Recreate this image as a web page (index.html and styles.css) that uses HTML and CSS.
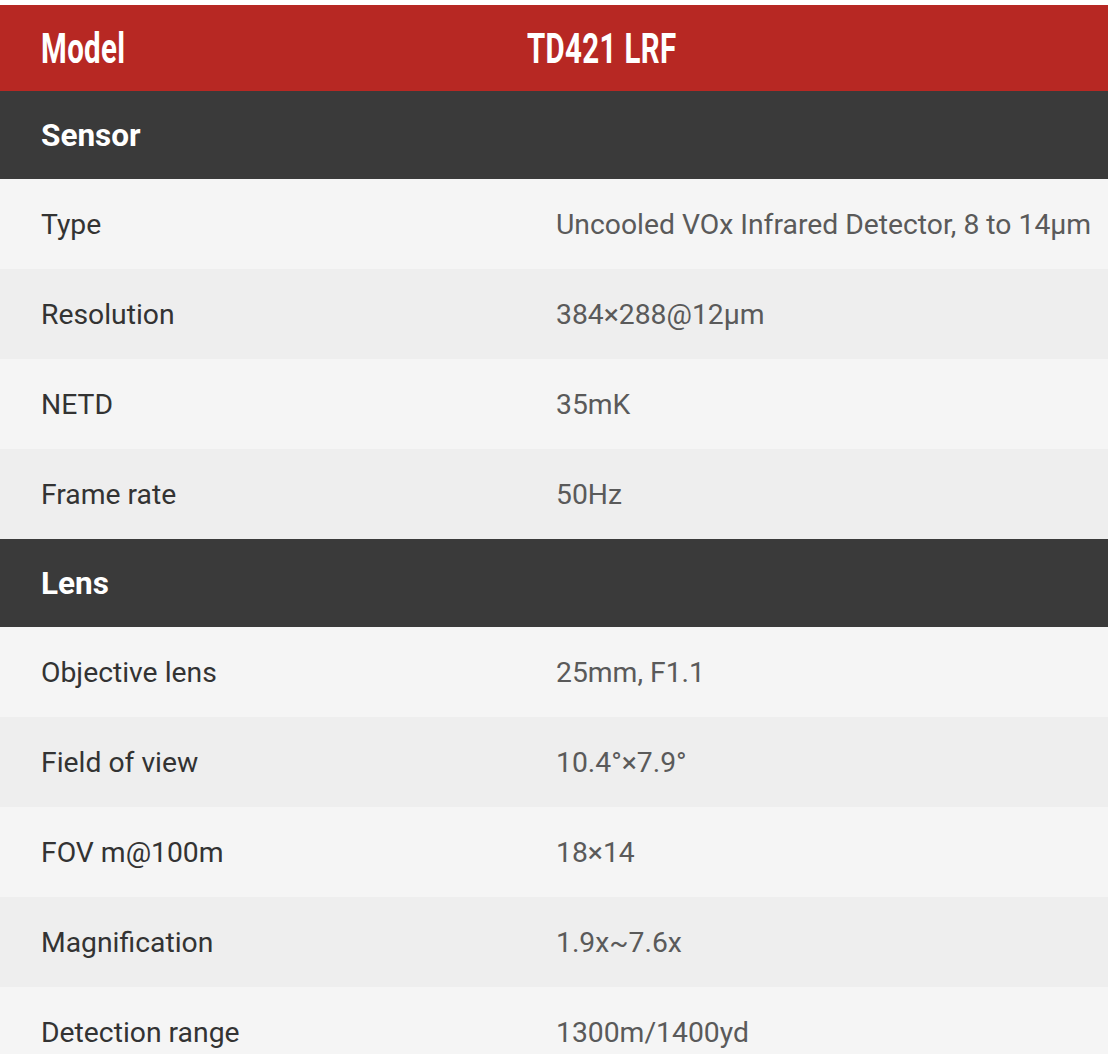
FILE: index.html
```html
<!DOCTYPE html>
<html>
<head>
<meta charset="utf-8">
<link rel="stylesheet" href="styles.css">
</head>
<body>
<div class="spec">
  <div class="head">
    <div class="head-label"><span class="cond">Model</span></div>
    <div class="head-value"><span class="cond">TD421 LRF</span></div>
  </div>
  <div class="section">Sensor</div>
  <div class="row odd"><div class="label">Type</div><div class="value">Uncooled VOx Infrared Detector, 8 to 14μm</div></div>
  <div class="row even"><div class="label">Resolution</div><div class="value">384×288@12μm</div></div>
  <div class="row odd"><div class="label">NETD</div><div class="value">35mK</div></div>
  <div class="row even"><div class="label">Frame rate</div><div class="value">50Hz</div></div>
  <div class="section">Lens</div>
  <div class="row odd"><div class="label">Objective lens</div><div class="value">25mm, F1.1</div></div>
  <div class="row even"><div class="label">Field of view</div><div class="value">10.4°×7.9°</div></div>
  <div class="row odd"><div class="label">FOV m@100m</div><div class="value">18×14</div></div>
  <div class="row even"><div class="label">Magnification</div><div class="value">1.9x~7.6x</div></div>
  <div class="row odd"><div class="label">Detection range</div><div class="value">1300m/1400yd</div></div>
</div>
</body>
</html>
```
FILE: styles.css
```css
html, body {
  margin: 0;
  padding: 0;
  background: #ffffff;
  overflow: hidden;
}
body {
  padding-top: 5px;
  font-family: Roboto, "Liberation Sans", sans-serif;
}
.spec {
  width: 1108px;
}
.head {
  display: flex;
  align-items: center;
  height: 86px;
  background: #b72823;
  color: #ffffff;
}
.head-label {
  width: 527px;
  padding-left: 41px;
  box-sizing: border-box;
}
.cond {
  display: inline-block;
  font-weight: 700;
  font-size: 43px;
  transform: scaleX(0.685);
  transform-origin: left center;
  letter-spacing: 0.5px;
}
.section {
  display: flex;
  align-items: center;
  height: 88px;
  padding-left: 41px;
  background: #3a3a3a;
  color: #ffffff;
  font-weight: 700;
  font-size: 31.5px;
}
.row {
  display: flex;
  align-items: center;
  height: 90px;
  font-size: 28.3px;
}
.odd { background: #f5f5f5; }
.even { background: #eeeeee; }
.label {
  width: 556px;
  padding-left: 41px;
  box-sizing: border-box;
  color: #333333;
}
.value {
  color: #5a5a5a;
  white-space: nowrap;
}
```
